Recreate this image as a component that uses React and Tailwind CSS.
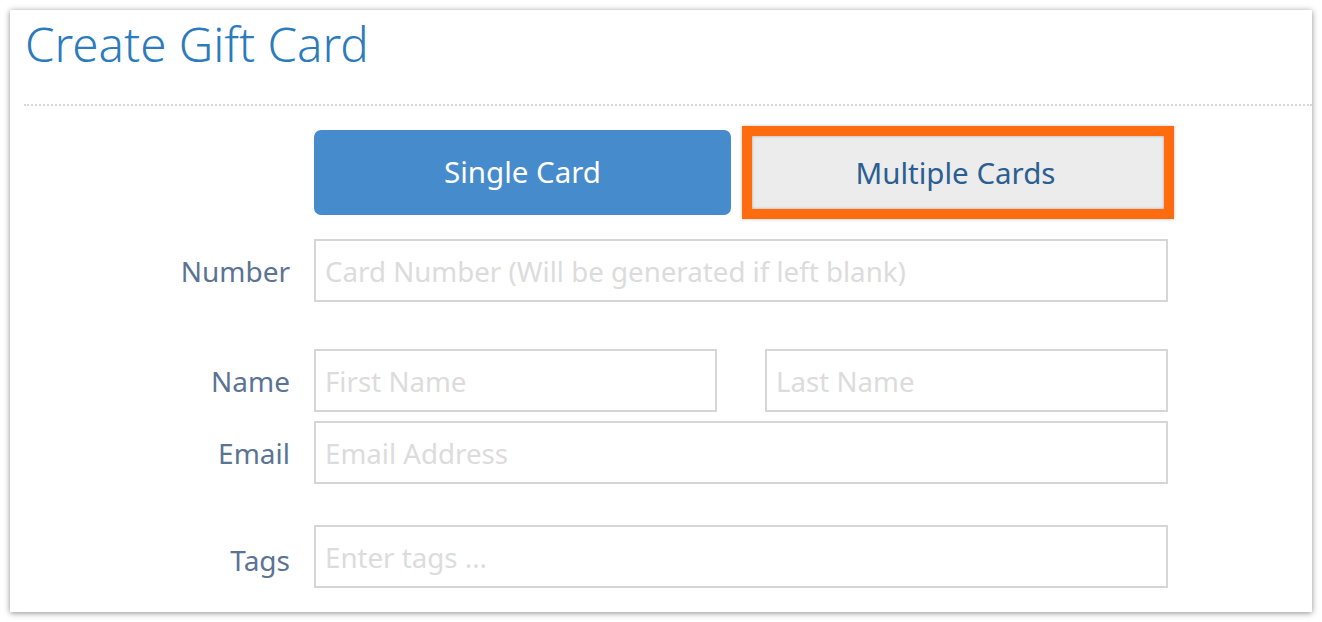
export default function App() {
  const font = { fontFamily: '"Noto Sans", "Open Sans", sans-serif' };
  const inputCls =
    "h-[63px] border-2 border-[#d6d6d6] bg-white px-[9px] text-[27.7px] text-[#333] placeholder:text-[#dcdcdc] outline-none";
  const labelCls = "h-[63px] flex items-center justify-end text-[28px] text-[#5b7493]";
  return (
    <div className="w-[1322px] h-[622px] bg-white p-[10px]" style={font}>
      <div className="w-full h-full bg-white shadow-[0_1px_6px_rgba(0,0,0,0.45)] flex flex-col">
        <h1 className="pl-[15px] pt-[5px] h-[94px] text-[47.5px] font-light leading-[58px] text-[#2b7bbd]">
          Create Gift Card
        </h1>
        <div className="ml-[14px] border-t-2 border-dotted border-[#d8d8d8]" />
        <div className="grid grid-cols-[280px_854px] gap-x-[24px] pt-[24px]">
          <div />
          <div className="flex gap-[20px]">
            <button className="w-[417px] h-[85px] rounded-[7px] bg-[#468bcb] text-white text-[29.5px]">
              Single Card
            </button>
            <div className="relative w-[417px] h-[85px]">
              <button className="w-full h-full rounded-[7px] bg-[#ececec] text-[#2b5e91] text-[29.5px] pr-[8px] pt-[2px]">
                Multiple Cards
              </button>
              <div className="absolute left-[-9px] top-[-4px] right-[-6px] bottom-[-4px] border-[10px] border-[#ff6c0f] shadow-[0_0_3px_rgba(0,0,0,0.25),inset_0_0_3px_rgba(0,0,0,0.3)]" />
            </div>
          </div>

          <label className={`mt-[24px] ${labelCls}`}>Number</label>
          <input className={`mt-[24px] w-full ${inputCls}`} placeholder="Card Number (Will be generated if left blank)" />

          <label className={`mt-[47px] ${labelCls}`}>Name</label>
          <div className="mt-[47px] flex gap-[48px]">
            <input className={`w-[403px] ${inputCls}`} placeholder="First Name" />
            <input className={`w-[403px] ${inputCls}`} placeholder="Last Name" />
          </div>

          <label className={`mt-[9px] ${labelCls}`}>Email</label>
          <input className={`mt-[9px] w-full ${inputCls}`} placeholder="Email Address" />

          <label className={`mt-[41px] pt-[6px] ${labelCls}`}>Tags</label>
          <input className={`mt-[41px] w-full ${inputCls} px-[7px]`} placeholder="Enter tags ..." />
        </div>
      </div>
    </div>
  );
}
